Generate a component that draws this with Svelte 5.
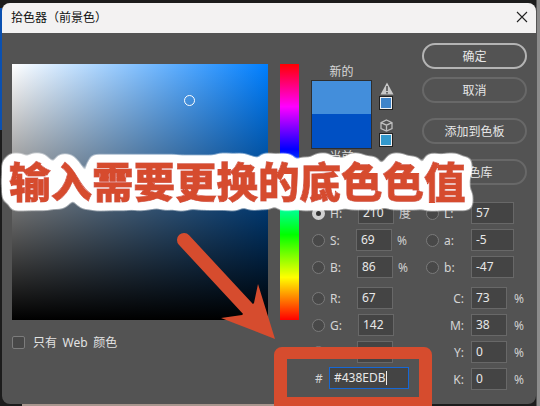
<script>
  // nudge: the input boxes are not quite aligned in the original dialog
  const hsb = [
    { label: 'H:', value: '210', unit: '度', nudge: 1, on: true },
    { label: 'S:', value: '69', unit: '%', nudge: -1 },
    { label: 'B:', value: '86', unit: '%', nudge: 0 }
  ];
  const rgb = [
    { label: 'R:', value: '67', nudge: 0 },
    { label: 'G:', value: '142', nudge: 1 },
    { label: 'B:', value: '', nudge: 0 }
  ];
  const lab = [
    { label: 'L:', value: '57' },
    { label: 'a:', value: '-5' },
    { label: 'b:', value: '-47' }
  ];
  const cmyk = [
    { label: 'C:', value: '73' },
    { label: 'M:', value: '38' },
    { label: 'Y:', value: '0' },
    { label: 'K:', value: '0' }
  ];
  const buttons = ['取消', '添加到色板', '颜色库'];
</script>

<div class="screen">
  <div class="window">
    <div class="titlebar">
      <span class="title">拾色器（前景色）</span>
      <svg class="close" width="12" height="12" viewBox="0 0 12 12">
        <path d="M1 1 L11 11 M11 1 L1 11" stroke="#222" stroke-width="1.1" fill="none" />
      </svg>
    </div>

    <div class="body">
      <div class="picker-col">
        <div class="picker">
          <span class="cursor"></span>
        </div>
        <label class="web-only">
          <span class="checkbox"></span>
          <span class="web-text">只有 Web 颜色</span>
        </label>
      </div>

      <div class="hue"></div>

      <div class="side">
        <div class="side-top">
          <div class="preview">
            <div class="preview-label">新的</div>
            <div class="preview-row">
              <div class="swatch">
                <div class="swatch-new"></div>
                <div class="swatch-current"></div>
              </div>
              <div class="gamut">
                <svg width="14" height="13" viewBox="0 0 14 13">
                  <path d="M7 0.5 L13.5 12.5 H0.5 Z" fill="#c8c8c8" />
                  <rect x="6.2" y="4" width="1.6" height="5" fill="#535353" />
                  <rect x="6.2" y="10" width="1.6" height="1.6" fill="#535353" />
                </svg>
                <span class="chip chip-print"></span>
                <svg class="cube" width="13" height="13" viewBox="0 0 13 13">
                  <path d="M6.5 1 L12 3.6 V9.6 L6.5 12 L1 9.6 V3.6 Z M1 3.6 L6.5 6.2 L12 3.6 M6.5 6.2 V12" fill="none" stroke="#bdbdbd" stroke-width="1.3" />
                </svg>
                <span class="chip chip-web"></span>
              </div>
            </div>
            <div class="preview-label">当前</div>
          </div>

          <div class="buttons">
            <button class="btn primary">确定</button>
            {#each buttons as b}
              <button class="btn">{b}</button>
            {/each}
          </div>
        </div>

        <div class="form">
          <div class="form-left">
            <div class="group">
              {#each hsb as r}
                <div class="row">
                  <span class="radio" class:on={r.on}></span>
                  <span class="label">{r.label}</span>
                  <span class="field" style="margin-left: {r.nudge}px">{r.value}</span>
                  <span class="unit">{r.unit}</span>
                </div>
              {/each}
            </div>
            <div class="group">
              {#each rgb as r}
                <div class="row">
                  <span class="radio"></span>
                  <span class="label">{r.label}</span>
                  <span class="field" style="margin-left: {r.nudge}px">{r.value}</span>
                </div>
              {/each}
            </div>
            <div class="hex-row">
              <span class="hash">#</span>
              <span class="field hex">#438EDB<i class="caret"></i></span>
            </div>
          </div>

          <div class="form-right">
            <div class="group">
              {#each lab as r}
                <div class="row">
                  <span class="radio"></span>
                  <span class="label">{r.label}</span>
                  <span class="field wide">{r.value}</span>
                </div>
              {/each}
            </div>
            <div class="group">
              {#each cmyk as r}
                <div class="row">
                  <span class="label cmyk">{r.label}</span>
                  <span class="field">{r.value}</span>
                  <span class="unit pct">%</span>
                </div>
              {/each}
            </div>
          </div>
        </div>
      </div>
    </div>
  </div>

  <!-- annotations drawn on top of the screenshot -->
  <svg class="arrow" width="540" height="406" viewBox="0 0 540 406">
    <path d="M184 240 L248 309" stroke="#d64c2e" stroke-width="14" stroke-linecap="round" fill="none" />
    <path d="M258 284 L275 339 L221 318 L242 315 L254 303 Z" fill="#d64c2e" />
  </svg>
  <div class="frame"></div>
  <svg class="headline" width="540" height="406" viewBox="0 0 540 406">
    <defs>
      <!-- white sticker outline with rounded corners -->
      <filter id="halo" x="-5%" y="-40%" width="110%" height="180%">
        <feMorphology in="SourceAlpha" operator="dilate" radius="4" />
        <feGaussianBlur stdDeviation="3" />
        <feComponentTransfer result="mask">
          <feFuncA type="linear" slope="10" intercept="-0.5" />
        </feComponentTransfer>
        <feFlood flood-color="#fff" />
        <feComposite in2="mask" operator="in" />
        <feMerge>
          <feMergeNode />
          <feMergeNode in="SourceGraphic" />
        </feMerge>
      </filter>
    </defs>
    <text x="9" y="198" filter="url(#halo)">输入需要更换的底色色值</text>
  </svg>
</div>

<style>
  :global(body) {
    margin: 0;
  }

  .screen {
    position: relative;
    width: 540px;
    height: 406px;
    overflow: hidden;
    box-sizing: border-box;
    padding: 3px 4px 0 2px;
    background:
      linear-gradient(#a8968e, #a8968e) 22px 404px / 260px 2px no-repeat,
      linear-gradient(to right, #1c1c1c 536px, #8c8c8c 537px);
    font-family: "Noto Sans", "Noto Sans CJK SC", sans-serif;
    font-size: 12px;
    color: #e2e2e2;
  }

  .screen::before {
    content: '';
    position: absolute;
    left: 0;
    top: 8px;
    width: 2px;
    height: 122px;
    background: #0a50b0;
  }

  .window {
    position: relative;
    height: 401px;
    border-radius: 8px;
    overflow: hidden;
    background: #535353;
  }

  .titlebar {
    display: flex;
    align-items: center;
    justify-content: space-between;
    box-sizing: border-box;
    height: 30px;
    padding: 0 8px 2px 9px;
    background: #f3f2f2;
    color: #111;
  }

  .body {
    display: flex;
    padding: 10px 9px 0 10px;
  }

  .picker-col {
    padding-top: 21px;
  }

  .picker {
    position: relative;
    width: 256px;
    height: 256px;
    background:
      linear-gradient(to top, #000, transparent),
      linear-gradient(to right, #fff, #007fff);
  }

  .cursor {
    position: absolute;
    left: 172px;
    top: 31px;
    width: 9px;
    height: 9px;
    border: 1px solid #fff;
    border-radius: 50%;
  }

  .web-only {
    display: flex;
    align-items: center;
    gap: 8px;
    margin-top: 13px;
  }

  .web-text {
    word-spacing: 2.5px;
  }

  .checkbox {
    width: 11px;
    height: 11px;
    border: 1px solid #7c7c7c;
    border-radius: 2px;
    background: #484848;
  }

  .hue {
    width: 19px;
    height: 256px;
    margin: 21px 12px 0 12px;
    background: linear-gradient(to bottom, #f00, #f0f 16.67%, #00f 33.33%, #0ff 50%, #0f0 66.67%, #ff0 83.33%, #f00);
  }

  .side {
    flex: 1;
  }

  .side-top {
    display: flex;
    justify-content: space-between;
    height: 159px;
  }

  .preview {
    width: 83px;
    padding-top: 21px;
    overflow: hidden;
  }

  .preview-label {
    width: 61px;
    height: 16px;
    line-height: 16px;
    text-align: center;
    color: #d8d8d8;
  }

  .preview-row {
    display: flex;
    gap: 8px;
  }

  .swatch {
    width: 59px;
    height: 67px;
    border: 1px solid #2e2e2e;
  }

  .swatch-new {
    height: 33px;
    background: #438edb;
  }

  .swatch-current {
    height: 34px;
    background: #0050c4;
  }

  .gamut {
    display: flex;
    flex-direction: column;
    align-items: flex-start;
    padding-top: 2px;
  }

  .cube {
    margin-top: 10px;
  }

  .chip {
    width: 10px;
    height: 10px;
    margin-top: 2px;
    border: 1px solid #f0f0f0;
    outline: 1px solid #222;
    outline-offset: 0;
  }

  .chip-print {
    background: #3f84c9;
  }

  .chip-web {
    background: #3399cc;
  }

  .buttons {
    display: flex;
    flex-direction: column;
    gap: 15px;
    width: 105px;
  }

  .btn {
    height: 26px;
    padding: 0;
    border: 2px solid #686868;
    border-radius: 13px;
    background: transparent;
    color: #e6e6e6;
    font: inherit;
  }

  .btn.primary {
    border-color: #b4b4b4;
    margin-bottom: -7px;
  }

  .form {
    display: flex;
    gap: 0;
  }

  .form-left {
    width: 114px;
  }

  .group {
    display: flex;
    flex-direction: column;
    gap: 5px;
    margin-bottom: 9px;
  }

  .row {
    display: flex;
    align-items: center;
    height: 22px;
  }

  .radio {
    flex: none;
    box-sizing: border-box;
    width: 13px;
    height: 13px;
    margin-left: 1px;
    border: 1px solid #7a7a7a;
    border-radius: 50%;
    background: #484848;
  }

  .radio.on {
    border: 4px solid #d0d0d0;
    background: #333;
  }

  .label {
    width: 27px;
    margin-left: 5px;
    color: #d4d4d4;
  }

  .field {
    box-sizing: border-box;
    display: block;
    width: 36px;
    height: 22px;
    padding-left: 4px;
    border: 1px solid #686868;
    background: #444;
    line-height: 19px;
    color: #e8e8e8;
  }

  .field.wide {
    width: 43px;
  }

  .unit {
    margin-left: 5px;
    color: #cfcfcf;
  }

  .hex-row {
    display: flex;
    align-items: center;
    margin-top: -5px;
    padding-left: 4px;
  }

  .hash {
    width: 14px;
    color: #d4d4d4;
  }

  .field.hex {
    width: 80px;
    border-color: #1668d6;
  }

  .caret {
    display: inline-block;
    width: 1px;
    height: 14px;
    vertical-align: -3px;
    background: #eee;
  }

  .form-right {
    flex: 1;
  }

  .form-right .group:last-child {
    margin-bottom: 0;
  }

  .label.cmyk {
    box-sizing: border-box;
    width: 46px;
    margin-left: 0;
    padding-right: 7px;
    text-align: right;
  }

  .unit.pct {
    margin-left: 7px;
  }

  .arrow {
    position: absolute;
    left: 0;
    top: 0;
  }

  .frame {
    position: absolute;
    left: 274px;
    top: 347px;
    box-sizing: border-box;
    width: 158px;
    height: 59px;
    border: solid #d64c2e;
    border-width: 12px 13px 9px;
    border-radius: 8px 8px 0 0;
  }

  .headline {
    position: absolute;
    left: 0;
    top: 0;
    font-family: "Noto Sans CJK SC", sans-serif;
    font-size: 41.5px;
    font-weight: 900;
    fill: #d64c2e;
    stroke: #d64c2e;
    stroke-width: 0.8px;
  }
</style>
